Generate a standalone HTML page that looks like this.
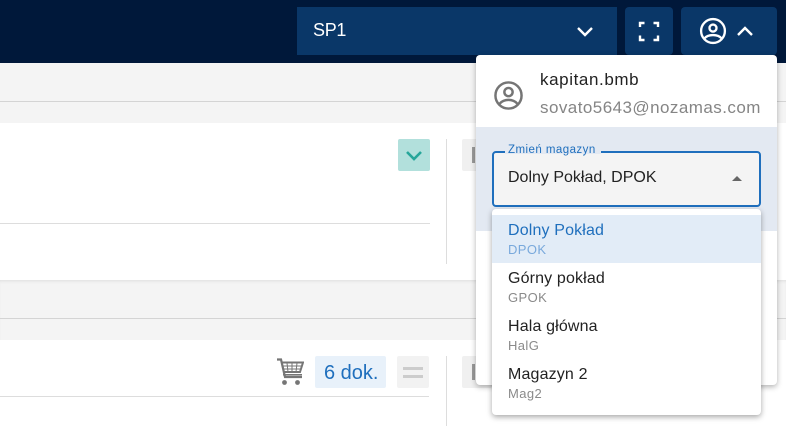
<!DOCTYPE html>
<html><head><meta charset="utf-8"><style>
*{box-sizing:border-box}
html,body{margin:0;padding:0}
body{width:786px;height:426px;overflow:hidden;position:relative;background:#fff;font-family:"Liberation Sans",sans-serif;color:#222}
.a{position:absolute}
.t{position:absolute;white-space:nowrap;line-height:20px}
</style></head><body>
<div class="a" style="left:0;top:0;width:786px;height:63px;background:#00183a"></div>
<div class="a" style="left:0;top:63px;width:786px;height:60px;background:#f4f4f4"></div>
<div class="a" style="left:0;top:101px;width:786px;height:1px;background:#d4d4d4"></div>
<div class="a" style="left:0;top:280px;width:786px;height:60px;background:#f4f4f4;box-shadow:inset 0 3px 3px -2px #ddd"></div>
<div class="a" style="left:0;top:318px;width:786px;height:1px;background:#d4d4d4"></div>
<div class="a" style="left:0;top:223px;width:430px;height:1px;background:#ddd"></div>
<div class="a" style="left:0;top:396px;width:429px;height:1px;background:#ddd"></div>
<div class="a" style="left:446px;top:139px;width:1px;height:125px;background:#ddd"></div>
<div class="a" style="left:446px;top:356px;width:1px;height:70px;background:#ddd"></div>
<div class="a" style="left:398px;top:139px;width:32px;height:32px;background:#b2e0dc;border-radius:2px"></div>
<svg class="a" style="left:398px;top:139px" width="32" height="32"><path d="M9 13l7 7 7-7" fill="none" stroke="#26a69a" stroke-width="2.600"/></svg>
<div class="a" style="left:462px;top:139px;width:30px;height:32px;background:#f0f0f0;border-radius:2px"></div>
<div class="a" style="left:472px;top:147px;width:3px;height:16px;background:#999"></div>
<div class="a" style="left:462px;top:356px;width:30px;height:32px;background:#f0f0f0;border-radius:2px"></div>
<div class="a" style="left:472px;top:364px;width:3px;height:16px;background:#999"></div>
<svg class="a" style="left:276px;top:358px" width="28" height="28" viewBox="0 0 28 28"><path d="M1 1.500h4l4 17.500h17" fill="none" stroke="#757575" stroke-width="2.200"/><path d="M6 4.500h21l-3 9.500H8.500" fill="none" stroke="#757575" stroke-width="2"/><path d="M11 5l1 9M16 5v9M21 5l-1 9M7 8h19M8 11h17" fill="none" stroke="#757575" stroke-width="1"/><path d="M7 16h19v1.500H7z" fill="#757575"/><circle cx="8.500" cy="24.500" r="2.400" fill="#757575"/><circle cx="21.500" cy="24.500" r="2.400" fill="#757575"/></svg>
<div class="a" style="left:315px;top:356px;width:71px;height:32px;background:#e8f1fa;border-radius:2px"></div>
<div class="t" style="left:324px;top:363px;font-size:20px;color:#1f6fbd;letter-spacing:0">6 dok.</div>
<div class="a" style="left:397px;top:356px;width:32px;height:32px;background:#f2f2f2;border-radius:2px"></div>
<div class="a" style="left:403px;top:367px;width:20px;height:3px;background:#ccc"></div>
<div class="a" style="left:403px;top:375px;width:20px;height:3px;background:#ccc"></div>

<div class="a" style="left:297px;top:7px;width:320px;height:48px;background:#0a3768"></div>
<div class="t" style="left:313px;top:20px;font-size:18px;color:#fff;letter-spacing:-.3px">SP1</div>
<svg class="a" style="left:573px;top:19px" width="24" height="24"><path d="M5 9l7 7 7-7" fill="none" stroke="#fff" stroke-width="2.400"/></svg>
<div class="a" style="left:625px;top:7px;width:48px;height:48px;background:#0a3768;border-radius:4px"></div>
<svg class="a" style="left:637px;top:19px" width="24" height="24"><path d="M3 8V4h4.500M16.500 4H21v4M21 16.500V21h-4.500M7.500 21H3v-4.500" fill="none" stroke="#fff" stroke-width="2.400"/></svg>
<div class="a" style="left:681px;top:7px;width:96px;height:48px;background:#0a3768;border-radius:4px"></div>
<svg class="a" style="left:699px;top:17px" width="28" height="28" viewBox="0 0 24 24"><circle cx="12" cy="12" r="10.200" fill="none" stroke="#fff" stroke-width="2"/><circle cx="12" cy="9.500" r="3" fill="none" stroke="#fff" stroke-width="2"/><path d="M4.500 18.500c2-2.500 5-3 7.500-3s5.500 .5 7.500 3" fill="none" stroke="#fff" stroke-width="2"/></svg>
<svg class="a" style="left:733px;top:19px" width="24" height="24"><path d="M5 16l7-7 7 7" fill="none" stroke="#fff" stroke-width="2.400"/></svg>

<div class="a" style="left:476px;top:55px;width:301px;height:330px;background:#fff;border-radius:4px;box-shadow:0 2px 6px rgba(0,0,0,.3);overflow:hidden">
<div class="a" style="left:0;top:72px;width:301px;height:104px;background:#e3e9f2"></div>
<div class="a" style="left:16px;top:272px;width:269px;height:1px;background:#ddd"></div>
</div>
<svg class="a" style="left:492px;top:79px" width="33" height="33" viewBox="0 0 24 24"><circle cx="12" cy="12" r="9.500" fill="none" stroke="#757575" stroke-width="1.800"/><circle cx="12" cy="9.500" r="3" fill="none" stroke="#757575" stroke-width="1.800"/><path d="M5.500 18c2-2.300 4-2.800 6.500-2.800s4.500.5 6.500 2.800" fill="none" stroke="#757575" stroke-width="1.800"/></svg>
<div class="t" style="left:540px;top:70px;font-size:17px;letter-spacing:.6px;color:#222">kapitan.bmb</div>
<div class="t" style="left:540px;top:98px;font-size:17px;letter-spacing:.45px;color:#858585">sovato5643@nozamas.com</div>

<div class="a" style="left:492px;top:151px;width:269px;height:56px;background:#f4f4f4;border:2px solid #1f6fbd;border-radius:4px"></div>
<div class="a" style="left:505px;top:148px;width:96px;height:6px;background:#e3e9f2"></div>
<div class="t" style="left:508px;top:140px;font-size:11.500px;letter-spacing:.45px;color:#1f6fbd">Zmień magazyn</div>
<div class="t" style="left:508px;top:168px;font-size:16px;letter-spacing:0;color:#222">Dolny Pokład, DPOK</div>
<svg class="a" style="left:732px;top:176px" width="10" height="5"><path d="M0 5L5 0l5 5z" fill="#666"/></svg>

<div class="a" style="left:492px;top:209px;width:269px;height:206px;background:#fff;border-radius:4px;box-shadow:0 2px 6px rgba(0,0,0,.35)"></div>
<div class="a" style="left:492px;top:215px;width:269px;height:48px;background:#e2ecf7"></div>
<div class="t" style="left:508px;top:221px;font-size:16px;letter-spacing:.15px;color:#1f6fbd">Dolny Pokład</div>
<div class="t" style="left:508px;top:240px;font-size:13px;letter-spacing:.4px;color:#79a9dc">DPOK</div>
<div class="t" style="left:508px;top:269px;font-size:16px;letter-spacing:.15px">Górny pokład</div>
<div class="t" style="left:508px;top:288px;font-size:13px;letter-spacing:.4px;color:#8a8a8a">GPOK</div>
<div class="t" style="left:508px;top:317px;font-size:16px;letter-spacing:.15px">Hala główna</div>
<div class="t" style="left:508px;top:336px;font-size:13px;letter-spacing:.4px;color:#8a8a8a">HalG</div>
<div class="t" style="left:508px;top:365px;font-size:16px;letter-spacing:.15px">Magazyn 2</div>
<div class="t" style="left:508px;top:384px;font-size:13px;letter-spacing:.4px;color:#8a8a8a">Mag2</div>
</body></html>
